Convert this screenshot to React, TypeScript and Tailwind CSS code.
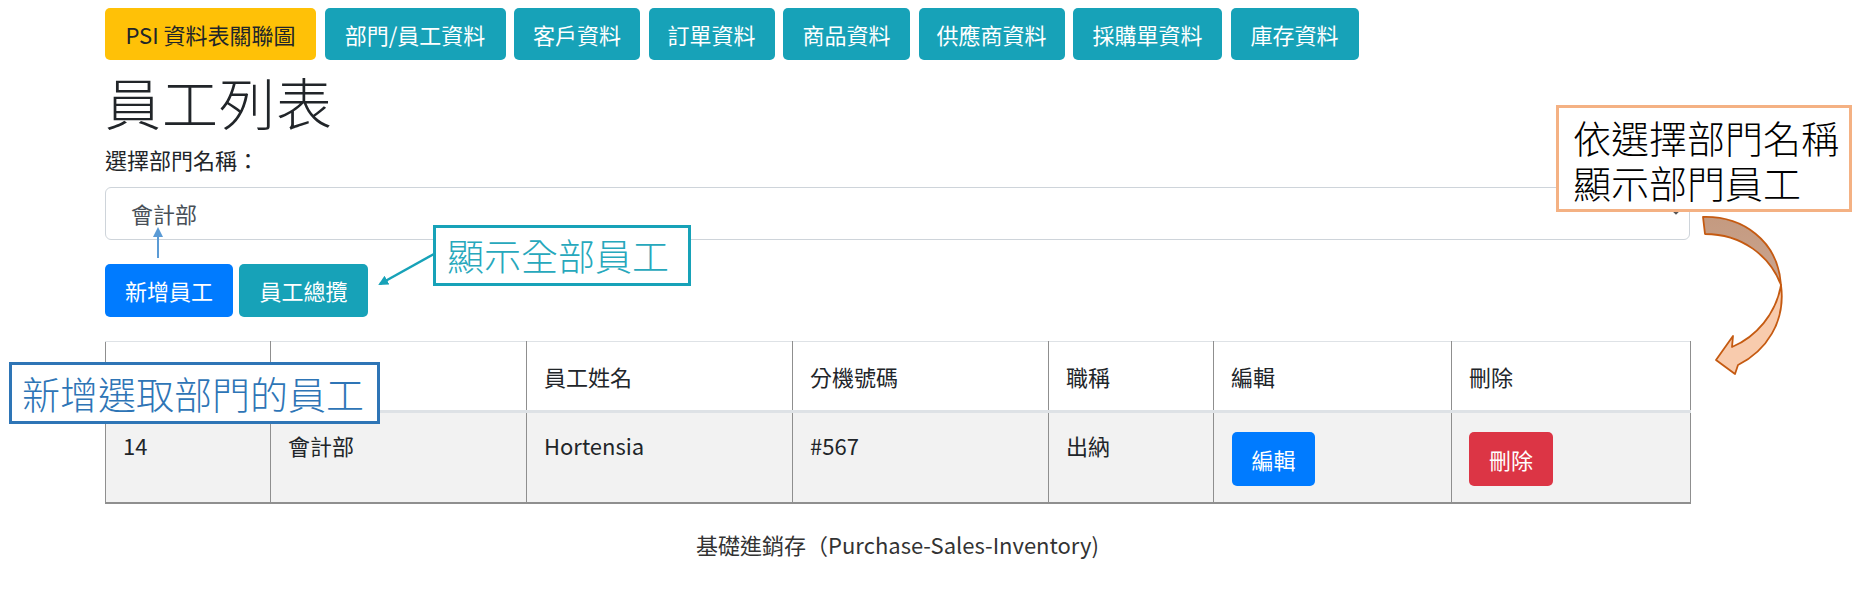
import React from "react";

const navItems: { label: string; w: string; yellow?: boolean }[] = [
  { label: "PSI 資料表關聯圖", w: "w-[211px]", yellow: true },
  { label: "部門/員工資料", w: "w-[181px]" },
  { label: "客戶資料", w: "w-[126px]" },
  { label: "訂單資料", w: "w-[126px]" },
  { label: "商品資料", w: "w-[127px]" },
  { label: "供應商資料", w: "w-[146px]" },
  { label: "採購單資料", w: "w-[149px]" },
  { label: "庫存資料", w: "w-[128px]" },
];

export default function App() {
  return (
    <div className="relative w-[1856px] h-[591px] overflow-hidden bg-white text-[#212529] font-['Noto_Sans_CJK_TC','Noto_Sans',sans-serif]">
      <div className="ml-[105px] w-[1585px]">
        {/* nav */}
        <div className="flex gap-[8.5px] pt-[8px]">
          {navItems.map((n) => (
            <div
              key={n.label}
              className={
                n.yellow
                  ? `${n.w} h-[52px] rounded-[5px] bg-[#ffc107] text-[#212529] text-[22px] flex items-center justify-center`
                  : `${n.w} h-[52px] rounded-[5px] bg-[#17a2b8] text-white text-[22px] flex items-center justify-center`
              }
            >
              {n.label}
            </div>
          ))}
        </div>

        <h1 className="mt-[7px] h-[67px] leading-[67px] text-[56px] font-light tracking-[1px] font-['Noto_Sans_CJK_TC_Light','Noto_Sans_CJK_TC_DemiLight','Noto_Sans_CJK_TC',sans-serif]">
          員工列表
        </h1>

        <div className="mt-[8px] h-[34px] leading-[34px] text-[22px]">選擇部門名稱：</div>

        <div className="mt-[11px] h-[53px] rounded-[6px] border border-[#ced4da] flex items-center pl-[25px] pr-[12px] text-[22px] text-[#495057] relative">
          <span>會計部</span>
          <svg className="absolute right-[6px] top-[18px]" width="14" height="10" viewBox="0 0 14 10">
            <path d="M2 2 L7 7 L12 2" stroke="#555" strokeWidth="2.5" fill="none" />
          </svg>
        </div>

        <div className="mt-[24px] flex gap-[6px]">
          <div className="w-[128px] h-[53px] rounded-[5px] bg-[#007bff] text-white text-[22px] flex items-center justify-center">新增員工</div>
          <div className="w-[129px] h-[53px] rounded-[5px] bg-[#17a2b8] text-white text-[22px] flex items-center justify-center">員工總攬</div>
        </div>

        <table className="mt-[24px] w-[1585px] table-fixed border-collapse text-[22px]">
          <colgroup>
            <col className="w-[165px]" />
            <col className="w-[256px]" />
            <col className="w-[266px]" />
            <col className="w-[256px]" />
            <col className="w-[165px]" />
            <col className="w-[238px]" />
            <col className="w-[239px]" />
          </colgroup>
          <thead>
            <tr className="h-[70px]">
              {["", "", "員工姓名", "分機號碼", "職稱", "編輯", "刪除"].map((h, i) => (
                <th
                  key={i}
                  className="text-left font-normal px-[17px] align-middle border-t border-t-[#dee2e6] border-b-[3px] border-b-[#dee2e6] border-x border-x-[#8f8f8f]"
                >
                  {h}
                </th>
              ))}
            </tr>
          </thead>
          <tbody>
            <tr className="h-[91px] bg-[#f2f2f2]">
              {["14", "會計部", "Hortensia", "#567", "出納"].map((c) => (
                <td key={c} className="align-top px-[17px] pt-[16px] border-x border-x-[#8f8f8f] border-b-2 border-b-[#8f8f8f]">
                  {c}
                </td>
              ))}
              <td className="align-top px-[18px] pt-[19px] border-x border-x-[#8f8f8f] border-b-2 border-b-[#8f8f8f]">
                <div className="w-[83px] h-[54px] rounded-[5px] bg-[#007bff] text-white flex items-center justify-center">編輯</div>
              </td>
              <td className="align-top px-[17px] pt-[19px] border-x border-x-[#8f8f8f] border-b-2 border-b-[#8f8f8f]">
                <div className="w-[84px] h-[54px] rounded-[5px] bg-[#dc3545] text-white flex items-center justify-center">刪除</div>
              </td>
            </tr>
          </tbody>
        </table>

        <div className="mt-[23px] h-[34px] leading-[34px] text-center text-[22px] text-[#333]">基礎進銷存（Purchase-Sales-Inventory)</div>
      </div>

      {/* arrows */}
      <svg className="absolute left-0 top-0 pointer-events-none" width="1856" height="591" viewBox="0 0 1856 591">
        <defs>
          <marker id="tealHead" markerWidth="10" markerHeight="10" refX="8" refY="5" orient="auto" markerUnits="userSpaceOnUse">
            <path d="M0 0 L10 5 L0 10 Z" fill="#17a2b8" />
          </marker>
          <marker id="blueHead" markerWidth="10" markerHeight="10" refX="8" refY="5" orient="auto" markerUnits="userSpaceOnUse">
            <path d="M0 0 L10 5 L0 10 Z" fill="#5b9bd5" />
          </marker>
          <linearGradient id="brownG" x1="0" y1="0" x2="0" y2="1">
            <stop offset="0" stopColor="#c49a80" />
            <stop offset="1" stopColor="#caa590" />
          </linearGradient>
        </defs>
        <line x1="434" y1="254" x2="380" y2="284" stroke="#17a2b8" strokeWidth="2.5" markerEnd="url(#tealHead)" />
        <line x1="158" y1="258" x2="158" y2="229" stroke="#5b9bd5" strokeWidth="2" markerEnd="url(#blueHead)" />
        <path
          d="M1703 217 C1742 216 1778 240 1781 285 C1770 256 1742 234 1705 234 Z"
          fill="url(#brownG)"
          stroke="#c55a11"
          strokeWidth="1.8"
          strokeLinejoin="round"
        />
        <path
          d="M1781 285 C1786 322 1766 351 1738 365 L1735 374 L1716 360 L1733 336 L1732 347 C1756 337 1776 314 1781 285 Z"
          fill="#f8cbad"
          stroke="#c55a11"
          strokeWidth="1.8"
          strokeLinejoin="round"
        />
      </svg>

      {/* callouts */}
      <div className="absolute left-[433px] top-[225px] w-[258px] h-[61px] border-[3px] border-[#17a2b8] bg-white flex items-center pl-[11px] text-[37px] leading-none text-[#27a8bc] font-light font-['Noto_Sans_CJK_TC_Light','Noto_Sans_CJK_TC_DemiLight','Noto_Sans_CJK_TC',sans-serif]">
        顯示全部員工
      </div>
      <div className="absolute left-[9px] top-[362px] w-[371px] h-[62px] border-[3px] border-[#2e75b6] bg-white flex items-center pl-[10px] text-[38px] leading-none text-[#2e75b6] font-light font-['Noto_Sans_CJK_TC_Light','Noto_Sans_CJK_TC_DemiLight','Noto_Sans_CJK_TC',sans-serif]">
        新增選取部門的員工
      </div>
      <div className="absolute left-[1556px] top-[105px] w-[296px] h-[107px] border-[3px] border-[#f4b183] bg-white pl-[14px] pt-[6px] text-[38px] leading-[45px] text-black font-light font-['Noto_Sans_CJK_TC_Light','Noto_Sans_CJK_TC_DemiLight','Noto_Sans_CJK_TC',sans-serif]">
        <div>依選擇部門名稱</div>
        <div>顯示部門員工</div>
      </div>
    </div>
  );
}
